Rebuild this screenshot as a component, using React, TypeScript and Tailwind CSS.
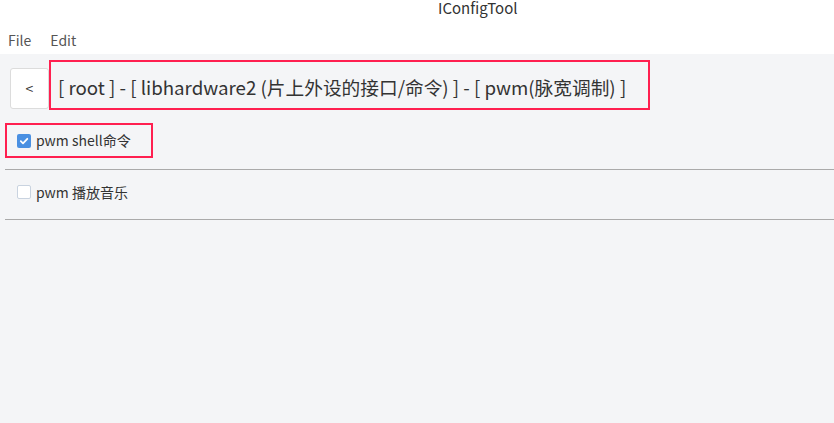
import { useState } from "react";

const FONT = "font-['Noto_Sans_CJK_SC','Noto_Sans',sans-serif]";

function Check({ checked, onToggle }: { checked: boolean; onToggle: () => void }) {
  return (
    <button
      onClick={onToggle}
      className={
        checked
          ? "w-[14px] h-[14px] rounded-[2px] bg-[#4a90e2] flex items-center justify-center"
          : "w-[14px] h-[14px] rounded-[2px] bg-white border border-[#c9d3e0]"
      }
    >
      {checked && (
        <svg width="10" height="10" viewBox="0 0 10 10">
          <path d="M1.8 5.2 L4 7.3 L8.3 2.8" fill="none" stroke="white" strokeWidth="1.8" strokeLinecap="round" strokeLinejoin="round" />
        </svg>
      )}
    </button>
  );
}

export default function App() {
  const [shell, setShell] = useState(true);
  const [music, setMusic] = useState(false);

  return (
    <div className={`w-[834px] h-[423px] flex flex-col bg-[#f4f5f7] text-[#333] ${FONT}`}>
      <div className="h-[30px] bg-white flex items-start">
        <span className="ml-[438px] text-[15px] leading-[16px]">IConfigTool</span>
      </div>
      <div className="h-[24px] bg-white flex items-start gap-[19px] pl-[8px] text-[14px] leading-[20px] text-[#555]">
        <span>File</span>
        <span>Edit</span>
      </div>

      <div className="flex items-end pl-[10px] pt-[6px]">
        <button className="w-[39px] h-[41px] bg-white border border-[#dcdcdc] rounded-[3px] text-[14px] text-[#333] mb-[1px]">
          &lt;
        </button>
        <div className="h-[50px] w-[601px] border-2 border-[#ff2050] flex items-center pl-[7px] pt-[4px] text-[18.7px]">
          [ root ] - [ libhardware2 (片上外设的接口/命令) ] - [ pwm(脉宽调制) ]
        </div>
      </div>

      <div className="pl-[5px] pt-[13px]">
        <div className="w-[148px] h-[35px] border-2 border-[#ff2050] flex items-center gap-[5px] pl-[10px] text-[14px]">
          <Check checked={shell} onToggle={() => setShell(!shell)} />
          <span>pwm shell命令</span>
        </div>
      </div>

      <div className="ml-[5px] mt-[11px] border-t border-[#aaa]" />
      <div className="h-[49px] flex items-start gap-[5px] pl-[17px] pt-[15px] text-[14px]">
        <Check checked={music} onToggle={() => setMusic(!music)} />
        <span className="-mt-[3px]">pwm 播放音乐</span>
      </div>
      <div className="ml-[5px] border-t border-[#aaa]" />
    </div>
  );
}
